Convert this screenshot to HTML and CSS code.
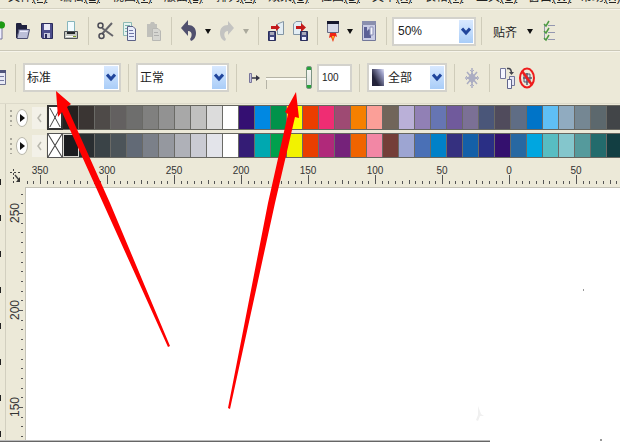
FILE: index.html
```html
<!DOCTYPE html>
<html lang="zh-CN">
<head>
    <meta charset="UTF-8">
    <meta name="viewport" content="width=device-width, initial-scale=1.0">
    <link rel="stylesheet" href="styles.css">
    <title>CorelDRAW</title>
</head>
<body>
    <nav class="menu">
        <a href="#">文件<u>(F)</u></a>
        <a href="#">编辑<u>(E)</u></a>
        <a href="#">视图<u>(V)</u></a>
        <a href="#">版面<u>(L)</u></a>
        <a href="#">排列<u>(A)</u></a>
        <a href="#">效果<u>(C)</u></a>
        <a href="#">位图<u>(B)</u></a>
        <a href="#">文本<u>(X)</u></a>
        <a href="#">表格<u>(T)</u></a>
        <a href="#">工具<u>(O)</u></a>
        <a href="#">窗口<u>(W)</u></a>
        <a href="#">帮助<u>(H)</u></a>
    </nav>

    <!-- standard toolbar -->
    <div class="toolbar">
        <button class="edge" aria-label="新建">
            <svg width="6" height="24" viewBox="0 0 6 24"><path d="M0 3H2V20H0" fill="#eef" stroke="#77779a"/><circle cx="1.500" cy="6" r="3.500" fill="#1c9a12"/></svg>
        </button>
        <button class="tool" aria-label="打开">
            <svg width="16" height="20" viewBox="0 0 16 20"><path d="M1 17V3Q1 2 2 2H6L7 4H12V8H4L2 17Z" fill="#20223f"/><path d="M4 8.500H14.500L12.500 17.500H2Z" fill="#bcbfd8" stroke="#4a4c70"/><path d="M5 10.500H12.500" stroke="#eef"/></svg>
        </button>
        <button class="tool" aria-label="保存">
            <svg width="14" height="20" viewBox="0 0 14 20"><path d="M1.500 2.500H12.500V17.500H2.500L1.500 16Z" fill="#4c4d8c" stroke="#2b2c5c"/><path d="M4 3H10V9H4Z" fill="#e8e8f6"/><path d="M4 12H10V17H4Z" fill="#c9cae0"/><path d="M5 13H7V17H5Z" fill="#2b2c5c"/></svg>
        </button>
        <button class="tool" aria-label="打印">
            <svg width="16" height="22" viewBox="0 0 16 22"><path d="M4.500 1.500H11.500V13H4.500Z" fill="#f3fcff" stroke="#86b6bd"/><path d="M1.500 11.500H14.500V18.500H1.500Z" fill="#c5c8c2" stroke="#505458"/><path d="M4 12H12V14H4Z" fill="#24282c"/><path d="M3 16.500H13" stroke="#fff"/><path d="M10 16.500H13" stroke="#7a9b20"/></svg>
        </button>
        <span class="sep"></span>
        <button class="tool" aria-label="剪切">
            <svg width="18" height="22" viewBox="0 0 18 22" fill="none"><path d="M5 8L16 16M5 14L15 3" stroke="#66666c" stroke-width="2"/><circle cx="3.500" cy="5.500" r="2.500" stroke="#4b4b55" stroke-width="1.500"/><circle cx="4.500" cy="16" r="2.500" stroke="#4b4b55" stroke-width="1.500"/></svg>
        </button>
        <button class="tool" aria-label="复制">
            <svg width="16" height="22" viewBox="0 0 16 22"><path d="M1.500 2.500H9.500V15.500H1.500Z" fill="#e6f3ef" stroke="#8dbab4"/><path d="M3 5.500H8M3 8.500H8M3 11.500H8" stroke="#7db3ae"/><path d="M5.500 6.500H11L13.500 9V20.500H5.500Z" fill="#e9edfb" stroke="#5d6287"/><path d="M7 10.500H11M7 13.500H12M7 16.500H12" stroke="#7177a6"/></svg>
        </button>
        <button class="tool" aria-label="粘贴">
            <svg width="16" height="22" viewBox="0 0 16 22"><path d="M1 4H4L5 2H8L9 4H11V17H1Z" fill="#c0c0bb"/><path d="M6.500 8.500H12L14.500 11V20.500H6.500Z" fill="#d6d6d1" stroke="#b8b8b4"/><path d="M8 12.500H12M8 15.500H13" stroke="#b0b0ae"/></svg>
        </button>
        <span class="sep"></span>
        <button class="tool" aria-label="撤消">
            <svg width="16" height="22" viewBox="0 0 16 22"><path d="M0 8L7 0V5C12 5 15 8 15 13C15 17 13 20 10 21L9 19C11 17 12 11 7 11V16Z" fill="#50506e"/></svg>
        </button>
        <button class="drop" aria-label="撤消列表"><svg width="6" height="5" viewBox="0 0 6 5"><path d="M0 0H6L3 5Z" fill="#111"/></svg></button>
        <button class="tool" aria-label="重做">
            <svg width="16" height="22" viewBox="0 0 16 22"><path d="M15 8L9 1V5C4 5 1 8 1 13C1 17 3 20 6 21L7 19C5 17 4 11 9 11V15Z" fill="#c3c3c1"/></svg>
        </button>
        <button class="drop" aria-label="重做列表"><svg width="6" height="5" viewBox="0 0 6 5"><path d="M0 0H6L3 5Z" fill="#aaa99c"/></svg></button>
        <span class="sep"></span>
        <button class="tool" aria-label="导入">
            <svg width="18" height="22" viewBox="0 0 18 22"><path d="M10.500 4L16.500 1.500V14.500H10.500Z" fill="#e3edf4" stroke="#8395a4"/><path d="M4 6H9V4L13 7.500L9 11V9H4Z" fill="#c41a1a"/><path d="M1.500 11.500H8.500V20.500H1.500Z" fill="#454a80" stroke="#2a2e5c"/><path d="M3 12H7V15H3Z" fill="#aab"/><path d="M3 17H7V20H3Z" fill="#eef"/></svg>
        </button>
        <button class="tool" aria-label="导出">
            <svg width="18" height="22" viewBox="0 0 18 22"><path d="M2.500 4L5 1.500H10.500V14.500H2.500Z" fill="#e3edf4" stroke="#8395a4"/><path d="M5 6H10V3L15 7.500L10 12V9H5Z" fill="#c41a1a"/><path d="M9.500 11.500H16.500V20.500H9.500Z" fill="#454a80" stroke="#2a2e5c"/><path d="M11 12H15V15H11Z" fill="#aab"/><path d="M11 17H15V20H11Z" fill="#eef"/></svg>
        </button>
        <span class="sep"></span>
        <button class="tool narrow" aria-label="应用程序启动器">
            <svg width="14" height="22" viewBox="0 0 14 22"><path d="M1.500 1.500H12.500V12.500H1.500Z" fill="#d5d9e8" stroke="#666a83"/><path d="M1 1H13V4H1Z" fill="#15172d"/><path d="M4 13H10L11 17L9 16L7 22L5 17L3 18Z" fill="#f02413"/><path d="M6 16H8L7 21Z" fill="#ffc21a"/></svg>
        </button>
        <button class="drop" aria-label="启动器列表"><svg width="6" height="5" viewBox="0 0 6 5"><path d="M0 0H6L3 5Z" fill="#111"/></svg></button>
        <button class="tool" aria-label="欢迎屏幕">
            <svg width="16" height="22" viewBox="0 0 16 22"><path d="M1.500 1.500H14.500V20.500H1.500Z" fill="#c9cce4" stroke="#73789a"/><path d="M1 1H15V5H1Z" fill="#8a8fae"/><path d="M3 7H6V11L8 9L10 11V18H3Z" fill="#5b6096"/><path d="M9 7H12V15H9Z" fill="#f3f4fc" stroke="#8a8fb5"/></svg>
        </button>
        <span class="sep"></span>
        <div class="combo zoom">
            <select aria-label="缩放级别"><option>50%</option><option>100%</option></select>
            <span class="arrow"><svg width="10" height="9" viewBox="0 0 10 9"><path d="M1 1.500L5 6L9 1.500" fill="none" stroke="#20459c" stroke-width="3"/></svg></span>
        </div>
        <span class="sep"></span>
        <button class="snap">贴齐</button>
        <button class="drop" aria-label="贴齐列表"><svg width="6" height="5" viewBox="0 0 6 5"><path d="M0 0H6L3 5Z" fill="#111"/></svg></button>
        <button class="tool" aria-label="选项">
            <svg width="14" height="22" viewBox="0 0 14 22" fill="none"><path d="M6 5.500H13M6 12.500H13M6 19.500H13M2.500 5V20M2 5.500H5M2 12.500H5M2 19.500H5" stroke="#9497b0"/><path d="M2 4L4 6L7 1M2 11L4 13L7 8M2 18L4 20L7 15" stroke="#4d9a43" stroke-width="1.500"/></svg>
        </button>
    </div>

    <!-- property bar -->
    <div class="toolbar props">
        <button class="edge" aria-label="透明度编辑">
            <svg width="6" height="18" viewBox="0 0 6 18"><path d="M0 1.500H5.500V15.500H0" fill="#e8eaf5" stroke="#6c7090"/><path d="M0 1H6V4H0Z" fill="#50557c"/><path d="M0 7.500H4M0 11.500H4" stroke="#767ba0"/></svg>
        </button>
        <span class="sep"></span>
        <div class="combo type">
            <select aria-label="透明度类型"><option>标准</option><option>线性</option></select>
            <span class="arrow"><svg width="10" height="9" viewBox="0 0 10 9"><path d="M1 1.500L5 6L9 1.500" fill="none" stroke="#20459c" stroke-width="3"/></svg></span>
        </div>
        <span class="sep"></span>
        <div class="combo mode">
            <select aria-label="透明度操作"><option>正常</option><option>添加</option></select>
            <span class="arrow"><svg width="10" height="9" viewBox="0 0 10 9"><path d="M1 1.500L5 6L9 1.500" fill="none" stroke="#20459c" stroke-width="3"/></svg></span>
        </div>
        <span class="sep"></span>
        <label class="tool" for="opacity" aria-label="开始透明度">
            <svg width="12" height="12" viewBox="0 0 12 12"><path d="M1.500 1.500H3.500V10.500H1.500Z" fill="#c6c4e0" stroke="#77749a"/><path d="M4 6H9" stroke="#333344" stroke-width="1.500"/><path d="M8 3L12 6L8 9Z" fill="#333344"/></svg>
        </label>
        <input class="slider" id="opacity" type="range" min="0" max="100" value="100">
        <input class="amount" type="text" value="100" aria-label="透明度数值">
        <span class="sep"></span>
        <div class="combo target">
            <select aria-label="透明度目标"><option>全部</option><option>填充</option></select>
            <span class="swatch"></span>
            <span class="arrow"><svg width="10" height="9" viewBox="0 0 10 9"><path d="M1 1.500L5 6L9 1.500" fill="none" stroke="#20459c" stroke-width="3"/></svg></span>
        </div>
        <span class="sep"></span>
        <button class="tool" aria-label="冻结">
            <svg width="16" height="22" viewBox="0 0 16 22" fill="none" stroke="#abadc2"><path d="M8 1V21M1 11H15M3 5L13 17M13 5L3 17" stroke-width="1.500"/><path d="M6 3L8 5L10 3M6 19L8 17L10 19M2 9L4 11L2 13M14 9L12 11L14 13"/><path d="M8 6L12 11L8 16L4 11Z" fill="#abadc2"/></svg>
        </button>
        <span class="sep"></span>
        <button class="tool" aria-label="复制透明度属性">
            <svg width="16" height="24" viewBox="0 0 16 24"><path d="M1.500 2.500H6.500V12.500H1.500Z" fill="#f5f6ff" stroke="#73769a"/><path d="M8 2.500H10Q12.500 3 12.500 8" fill="none" stroke="#44464f" stroke-width="1.500"/><path d="M10 6H15L12.500 9Z" fill="#44464f"/><path d="M10.500 10.500H15.500V19.500H10.500Z" fill="#e4e5f4" stroke="#73769a"/><path d="M8.500 13.500H12.500V22.500H8.500Z" fill="#f5f6ff" stroke="#62668c"/></svg>
        </button>
        <button class="tool" aria-label="清除透明度">
            <svg width="16" height="22" viewBox="0 0 16 22" fill="none"><path d="M5 7H11V15H5Z" fill="#d8dae4" stroke="#555a6e"/><path d="M4 11H13M8 6V18" stroke="#555a6e" stroke-width="1.500"/><ellipse cx="8" cy="11" rx="7" ry="9.500" stroke="#ee1c1c" stroke-width="2"/><path d="M3 4L13 18" stroke="#ee1c1c" stroke-width="2.500"/></svg>
        </button>
    </div>

    <div class="workspace">
        <aside class="toolbox">
            <i></i><i></i><i></i><i></i><i></i><i></i><i></i><i></i>
        </aside>
        <div class="document">
            <div class="palette">
                <span class="grip"></span>
                <button class="flyout" aria-label="调色板菜单"><svg width="5" height="8" viewBox="0 0 5 8"><path d="M0 0L5 4L0 8Z" fill="#111"/></svg></button>
                <button class="scroll" aria-label="向左滚动"><svg width="5" height="10" viewBox="0 0 5 10"><path d="M4 1L1 5L4 9" fill="none" stroke="#b9b8ae" stroke-width="1.500"/></svg></button>
                <button class="none current" aria-label="无填充"><svg width="100%" height="100%" viewBox="0 0 14 22" preserveAspectRatio="none"><path d="M1 1L13 21M13 1L1 21" stroke="#333"/></svg></button>
                <div class="colors" id="rgb"></div>
            </div>
            <div class="palette">
                <span class="grip"></span>
                <button class="flyout" aria-label="调色板菜单"><svg width="5" height="8" viewBox="0 0 5 8"><path d="M0 0L5 4L0 8Z" fill="#111"/></svg></button>
                <button class="scroll" aria-label="向左滚动"><svg width="5" height="10" viewBox="0 0 5 10"><path d="M4 1L1 5L4 9" fill="none" stroke="#b9b8ae" stroke-width="1.500"/></svg></button>
                <button class="none" aria-label="无填充"><svg width="100%" height="100%" viewBox="0 0 14 22" preserveAspectRatio="none"><path d="M0 0L14 22M14 0L0 22" stroke="#444"/></svg></button>
                <div class="colors" id="cmyk"></div>
            </div>
            <div class="page">
                <div class="origin">
                    <svg width="12" height="14" viewBox="0 0 12 14" fill="none" stroke="#444"><path d="M3.500 0V14M0 3.500H12" stroke-dasharray="2 2"/><path d="M5 6L9 11" stroke-width="1.500"/><path d="M10 8V13H6Z" fill="#333" stroke="none"/></svg>
                </div>
                <svg class="ruler-h" id="rulerH"></svg>
                <svg class="ruler-v" id="rulerV"></svg>
                <main class="canvas"></main>
            </div>
        </div>
    </div>
    <div class="edge-line"></div>

    <!-- annotation arrows over the window -->
    <svg class="notes" width="620" height="442" viewBox="0 0 620 442">
        <path d="M56 91L71 104L67 107L110 203L170 346L168 347L103 203L62 112L58 117Z" fill="#fe0000"/>
        <path d="M296 92L299 118L295 117L275 203L230 409L228 408L268 203L288 114L285 112Z" fill="#fe0000"/>
        <path d="M478 406L481 414L484 416L480 416L478 421L476 420L478 415Z" fill="#f0f0f0"/>
        <path d="M583 289H584V291H583ZM600 439H602V441H600Z" fill="#999"/>
    </svg>

    <script src="script.js"></script>
</body>
</html>
```

FILE: styles.css
```css
* {
    box-sizing: border-box;
}

body {
    margin: 0;
    min-height: 100vh;
    display: flex;
    flex-direction: column;
    position: relative;
    overflow: hidden;
    background-color: #ece9d8;
    color: #222;
    font-family: "Liberation Sans", "Noto Sans CJK SC", sans-serif;
    font-size: 12px;
}

button {
    padding: 0;
    border: none;
    background: none;
    color: inherit;
    font: inherit;
}

svg {
    display: block;
    flex: none;
}

/* menu, scrolled mostly out of view */
.menu {
    display: flex;
    align-items: flex-end;
    gap: 12px;
    height: 9px;
    padding: 0 0 4px 8px;
    overflow: hidden;
    border-bottom: 1px solid #d5d2c2;
}

.menu a {
    flex: none;
    width: 40px;
    color: #222;
    line-height: 14px;
    text-decoration: none;
    white-space: nowrap;
}

/* toolbars */
.toolbar {
    display: flex;
    align-items: center;
    height: 42px;
    padding-top: 2px;
    border-top: 1px solid #f6f4ea;
    border-bottom: 1px solid #cbc8b8;
}

.toolbar.props {
    height: 53px;
    padding-top: 0;
    border-bottom-color: #dddaca;
}

.tool, .drop, .edge, .snap {
    flex: none;
    display: flex;
    align-items: center;
    justify-content: center;
}

.tool {
    width: 24px;
    height: 28px;
}

.tool.narrow,
.props .tool {
    width: 20px;
}

.edge {
    width: 11px;
    justify-content: flex-start;
}

.drop {
    width: 14px;
    height: 28px;
}

.snap {
    width: 36px;
    font-size: 12px;
}

.sep {
    flex: none;
    width: 1px;
    height: 28px;
    margin: 0 5px;
    background-color: #cfccba;
}

.props .sep {
    margin: 0 7px;
}

.props .edge {
    width: 8px;
}

.combo {
    flex: none;
    display: grid;
    grid-template-columns: 1fr 16px;
    height: 29px;
    border: 2px solid #d3d2cc;
    background-color: #fff;
}

.combo select {
    grid-area: 1 / 1 / 2 / 3;
    min-width: 0;
    padding: 0 2px;
    border: none;
    appearance: none;
    background: none;
    color: #222;
    font-family: "Liberation Sans", "Noto Sans CJK SC", sans-serif;
    font-size: 12px;
}

.combo .arrow {
    grid-area: 1 / 2 / 2 / 3;
    display: flex;
    align-items: center;
    justify-content: center;
    margin: 1px;
    background: linear-gradient(#d9e9ff, #a9cdf8);
    pointer-events: none;
}

.zoom {
    width: 84px;
}

.zoom select {
    padding-left: 4px;
}

.type {
    width: 98px;
}

.mode {
    width: 93px;
}

.target {
    width: 80px;
}

.target select {
    padding-left: 19px;
}

.target .swatch {
    grid-area: 1 / 1 / 2 / 2;
    align-self: center;
    width: 12px;
    height: 17px;
    margin-left: 3px;
    background: linear-gradient(60deg, #23233a 30%, #9c9fc6 80%, #e5e6f5);
    pointer-events: none;
}

.slider {
    flex: none;
    width: 46px;
    height: 24px;
    margin: 0 5px 0 2px;
    appearance: none;
    background: linear-gradient(#b5b3a6, #b5b3a6) 0 11px / 100% 1px no-repeat,
                linear-gradient(#fbfaf3, #fbfaf3) 0 12px / 100% 2px no-repeat,
                linear-gradient(#b5b3a6, #b5b3a6) 0 11px / 1px 12px no-repeat;
}

.slider::-webkit-slider-thumb {
    appearance: none;
    width: 6px;
    height: 23px;
    border: 1px solid #7d9384;
    border-radius: 2px;
    background: linear-gradient(#27a33a 3px, #f4f6f2 3px, #dfe3de 18px, #27a33a 18px);
}

.amount {
    flex: none;
    width: 35px;
    height: 28px;
    padding: 0 3px;
    border: 2px solid #d3d2cc;
    color: #222;
    font-family: "Liberation Sans", sans-serif;
    font-size: 10px;
}

/* toolbox and document */
.workspace {
    flex: 1;
    display: flex;
}

.toolbox {
    flex: none;
    display: flex;
    flex-direction: column;
    gap: 30px;
    width: 6px;
    padding-top: 75px;
    border-right: 1px solid #d2cfbf;
}

.toolbox i {
    width: 1px;
    height: 6px;
    background-color: #222;
}

.document {
    flex: 1;
    min-width: 0;
    display: flex;
    flex-direction: column;
    gap: 3px;
    padding-top: 1px;
}

.palette {
    display: flex;
    align-items: center;
    height: 25px;
    padding-left: 4px;
}

.grip {
    flex: none;
    width: 2px;
    height: 16px;
    margin-right: 4px;
    background: repeating-linear-gradient(#a9a79b 0 2px, transparent 2px 5px);
}

.flyout {
    flex: none;
    display: flex;
    align-items: center;
    justify-content: center;
    width: 12px;
    height: 18px;
    padding-left: 1px;
    border: 1px solid #b8b6aa;
    border-radius: 50%;
    background-color: #fff;
}

.scroll {
    flex: none;
    display: flex;
    align-items: center;
    justify-content: center;
    width: 14px;
    height: 22px;
    margin: 0 1px 0 4px;
    background-color: #f3f1e8;
}

.none {
    flex: none;
    width: 16px;
    height: 25px;
    border: 1px solid #555;
    background-color: #fff;
}

.none.current {
    border: 2px solid #333;
}

.colors {
    flex: 1;
    display: flex;
    height: 25px;
    overflow: hidden;
    border: solid #66665f;
    border-width: 1px 0;
    background-color: #66665f;
}

.colors button {
    flex: none;
    width: 16px;
    border-right: 1px solid #6a6a66;
}

.colors button.picked {
    border: 1px solid #d8d8d2;
}

.page {
    flex: 1;
    display: grid;
    grid-template-columns: 19px 1fr;
    grid-template-rows: 26px 1fr;
    min-height: 0;
}

.origin {
    display: flex;
    align-items: center;
    justify-content: center;
    padding-top: 4px;
}

.ruler-h, .ruler-v {
    width: 100%;
    height: 100%;
    min-height: 0;
    overflow: visible;
}

.ruler-h text, .ruler-v text {
    font-family: "Liberation Sans", sans-serif;
    font-size: 10px;
    text-anchor: middle;
    fill: #333;
}

.ruler-v text {
    font-size: 12px;
}

.canvas {
    border: solid #c4c2b6;
    border-width: 1px 0 0 1px;
    background-color: #fff;
}

.edge-line {
    width: 79%;
    height: 1px;
    background-color: #666;
    box-shadow: 0 -1px #bbb;
    margin-top: -1px;
    z-index: 1;
}

.notes {
    position: absolute;
    top: 0;
    left: 0;
    z-index: 2;
    pointer-events: none;
}
```

FILE: script.js
```js
const rgb = [
    '#25211f', '#3a3533', '#4e4a48', '#636060', '#6e6e6d', '#80807f', '#929292',
    '#a8a8a8', '#c0c0bf', '#dcdcdc', '#ffffff', '#340f72', '#0088e2', '#00924a',
    '#ffff00', '#eb3d00', '#ef2d73', '#9e4a73', '#f58000', '#fb9f98', '#71655a',
    '#bab0d8', '#9180b5', '#6675b3', '#705a9c', '#7b7095', '#4a5679', '#504b5c',
    '#5f6d85', '#0074c8', '#5fbff5', '#90abc0', '#758793', '#5c686d', '#424548'
];
const cmyk = [
    '#1a1c1f', '#292e31', '#3a4347', '#4c5459', '#626a76', '#7b8089', '#95989f',
    '#afb1b8', '#cacbd3', '#e3e4ea', '#ffffff', '#341c75', '#00a8b0', '#00a04d',
    '#f2f200', '#e93e00', '#b0297a', '#75227a', '#f06400', '#f287a5', '#743e38',
    '#9da5d2', '#4a70b6', '#0081c8', '#35307f', '#1460a8', '#2a2f85', '#34106e',
    '#2768a2', '#00a6e0', '#58bdc2', '#84c6cc', '#559a9c', '#236b6c', '#123e42'
];

function fillPalette(id, colors) {
    const palette = document.getElementById(id);
    colors.forEach(color => {
        const cell = document.createElement('button');
        cell.style.backgroundColor = color;
        cell.setAttribute('aria-label', color);
        palette.appendChild(cell);
    });
}

function drawRulerH() {
    const ruler = document.getElementById('rulerH');
    const zero = 484;
    const step = 6.7;
    let out = '';
    for (let i = -72; i < 60; i++) {
        const x = Math.round(zero + i * step);
        if (x < 0) continue;
        const major = i % 10 === 0;
        const top = major ? 14 : (i % 5 === 0 ? 19 : 20);
        out += `<path d="M${x}.5 ${top}V23" stroke="#555"/>`;
        if (major) {
            out += `<text x="${x}" y="13">${Math.abs(i * 5)}</text>`;
        }
    }
    ruler.innerHTML = out;
}

function drawRulerV() {
    const ruler = document.getElementById('rulerV');
    const start = 26;
    const step = 9.7;
    let out = '';
    for (let i = -2; i < 24; i++) {
        const y = Math.round(start + i * step);
        const major = i % 10 === 0;
        out += `<path d="M${major ? 13 : 15} ${y}.5H17" stroke="#555"/>`;
        if (major) {
            out += `<text transform="translate(13 ${y}) rotate(-90)">${250 - i * 5}</text>`;
        }
    }
    ruler.innerHTML = out;
}

fillPalette('rgb', rgb);
fillPalette('cmyk', cmyk);
document.querySelector('#cmyk button').classList.add('picked');
drawRulerH();
drawRulerV();
```
